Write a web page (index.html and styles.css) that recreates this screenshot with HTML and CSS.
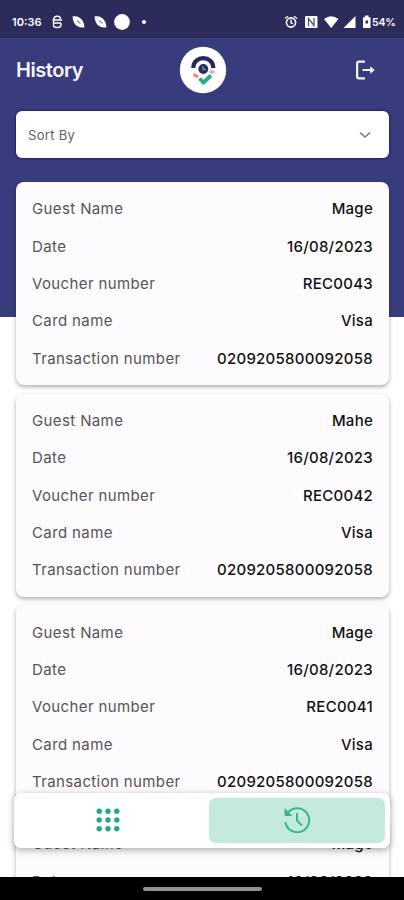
FILE: index.html
```
<!DOCTYPE html>
<html lang="en">
<head>
<meta charset="utf-8">
<title>History</title>
<link rel="stylesheet" href="styles.css">
</head>
<body>
<div class="phone">
  <div class="status">
    <span class="clock">10:36</span>
    <svg class="notifications" width="96" height="20" viewBox="0 0 96 20" fill="#fff">
      <path d="M2.800 7.500q0-3.300 3.400-3.300t3.400 3.300M1.500 8h9.500M2.500 11h7.500M2.500 8v5q0 2.500 3.700 2.500t3.700-2.500V11" fill="none" stroke="#fff" stroke-width="1.400"/>
      <path d="M21.500 4.500C26 3.500 30 5.500 32 9.500q1.300 2.500 1.500 5.800C29 16 25 14.500 23 10.500q-1.200-2.500-1.500-6z"/>
      <path d="M26 8.500l3.500 3" stroke="#8888a8" stroke-width="1.200"/>
      <path d="M43.500 4.500C48 3.500 52 5.500 54 9.500q1.300 2.500 1.500 5.800C51 16 47 14.500 45 10.500q-1.200-2.500-1.500-6z"/>
      <path d="M48 8.500l3.500 3" stroke="#8888a8" stroke-width="1.200"/>
      <circle cx="71" cy="10" r="7.900"/>
      <circle cx="93" cy="10" r="2.100"/>
    </svg>
    <svg class="system" width="88" height="20" viewBox="0 0 88 20" fill="#fff">
      <circle cx="7" cy="10.500" r="4.600" fill="none" stroke="#fff" stroke-width="1.600"/>
      <path d="M1 6.500l3-2.300M13 6.500l-3-2.300M7 7.500v3.300l2 1.200" fill="none" stroke="#fff" stroke-width="1.400"/>
      <rect x="21" y="4" width="12.500" height="12" rx="1"/>
      <path d="M24.500 14V6.500l5.500 7V6" fill="none" stroke="#56567c" stroke-width="1.300"/>
      <path d="M40 7q7.200-5.500 14.400 0L47.200 16z"/>
      <path d="M59.500 16L71.500 4v12z"/>
      <path d="M79 5.200h2V3.500h3.500v1.700h2V16H79z"/>
      <path d="M81.500 8.500h2.600v3h-2.600z" fill="#2c2c5c"/>
    </svg>
    <span class="battery">54%</span>
  </div>

  <header class="header">
    <h1>History</h1>
    <svg class="logo" width="48" height="48" viewBox="0 0 48 48">
      <circle cx="24" cy="24" r="23.200" fill="#fff"/>
      <path d="M14.300 22C14.300 8.800 34.300 8.800 34.300 22" fill="none" stroke="#25285f" stroke-width="4.200"/>
      <circle cx="24.300" cy="23" r="4.900" fill="#282960"/>
      <path d="M24 20v3.500h3" fill="none" stroke="#49a9a8" stroke-width="1.300"/>
      <path d="M14.500 28.300l4.500 2.800" stroke="#f08a98" stroke-width="3.400"/>
      <path d="M30.500 26h5M33 23.800v4.400" stroke="#f2919b" stroke-width="1.400"/>
      <path d="M20.500 32.500l4 4L32 29.500" fill="none" stroke="#2bac80" stroke-width="3.800"/>
    </svg>
    <svg class="logout" width="22" height="22" viewBox="0 0 22 22" fill="none" stroke="#f4f4fc" stroke-width="2.200">
      <path d="M11 2.700H5.100Q3.100 2.700 3.100 4.500v13q0 1.800 2 1.800H11"/>
      <path d="M8.500 11H17" stroke-width="2"/>
      <path d="M16.200 7.200l4.500 3.800-4.500 3.800z" fill="#f4f4fc" stroke="none"/>
    </svg>
  </header>

  <div class="sort">
    <span>Sort By</span>
    <svg width="12" height="8" viewBox="0 0 12 8" fill="none" stroke="#777" stroke-width="1.500"><path d="M1 1.500l5 4.500 5-4.500"/></svg>
  </div>

  <main class="list">
    <section class="card">
      <div class="row"><span>Guest Name</span><b>Mage</b></div>
      <div class="row"><span>Date</span><b>16/08/2023</b></div>
      <div class="row"><span>Voucher number</span><b>REC0043</b></div>
      <div class="row"><span>Card name</span><b>Visa</b></div>
      <div class="row"><span>Transaction number</span><b>0209205800092058</b></div>
    </section>
    <section class="card">
      <div class="row"><span>Guest Name</span><b>Mahe</b></div>
      <div class="row"><span>Date</span><b>16/08/2023</b></div>
      <div class="row"><span>Voucher number</span><b>REC0042</b></div>
      <div class="row"><span>Card name</span><b>Visa</b></div>
      <div class="row"><span>Transaction number</span><b>0209205800092058</b></div>
    </section>
    <section class="card">
      <div class="row"><span>Guest Name</span><b>Mage</b></div>
      <div class="row"><span>Date</span><b>16/08/2023</b></div>
      <div class="row"><span>Voucher number</span><b>REC0041</b></div>
      <div class="row"><span>Card name</span><b>Visa</b></div>
      <div class="row"><span>Transaction number</span><b>0209205800092058</b></div>
    </section>
    <section class="card">
      <div class="row"><span>Guest Name</span><b>Mage</b></div>
      <div class="row"><span>Date</span><b>16/08/2023</b></div>
    </section>
  </main>

  <nav class="tabs">
    <div class="tab">
      <svg width="24" height="24" viewBox="0 0 24 24" fill="#22aa7d">
        <circle cx="3.200" cy="3.200" r="2.700"/><circle cx="12" cy="3.200" r="2.700"/><circle cx="20.800" cy="3.200" r="2.700"/>
        <circle cx="3.200" cy="12" r="2.700"/><circle cx="12" cy="12" r="2.700"/><circle cx="20.800" cy="12" r="2.700"/>
        <circle cx="3.200" cy="20.800" r="2.700"/><circle cx="12" cy="20.800" r="2.700"/><circle cx="20.800" cy="20.800" r="2.700"/>
      </svg>
    </div>
    <div class="tab active">
      <svg width="28" height="28" viewBox="0 0 28 28" fill="none" stroke="#35b88c" stroke-width="2">
        <path d="M2.300 16A12 12 0 1 0 5 6.500"/>
        <path d="M2 2.800v6.700h6.700z" fill="#35b88c" stroke-width="1"/>
        <path d="M14 7v7.500l5 5"/>
      </svg>
    </div>
  </nav>
  <div class="gesture"><span class="handle"></span></div>
</div>
</body>
</html>
```
FILE: styles.css
```
* { box-sizing: border-box; }
body { margin: 0; font-family: Inter, sans-serif; }
.phone {
  position: relative;
  width: 404px;
  height: 900px;
  overflow: hidden;
  background: linear-gradient(#383c7c 317px, #fff 317px);
}
.status {
  display: flex;
  align-items: center;
  height: 38px;
  padding: 6px 10px 0 12px;
  background: #2c2c5c;
  color: #fff;
  font-size: 11px;
  font-weight: 600;
}
.clock { width: 39px; }
.system { margin-left: auto; }
.battery { width: 22px; font-size: 10.5px; letter-spacing: -.2px; }
.header {
  display: grid;
  grid-template-columns: 1fr 48px 1fr;
  align-items: center;
  height: 73px;
  padding: 0 15px 10px 16px;
  color: #f6f6fc;
}
h1 { margin: 0; font-size: 20px; font-weight: 600; line-height: 24px; letter-spacing: -.45px; }
.logout { justify-self: end; margin-right: 13px; }
.sort {
  display: flex;
  align-items: center;
  justify-content: space-between;
  height: 47px;
  margin: 0 15px 0 16px;
  padding: 0 18px 0 12px;
  border-radius: 6px;
  background: #fff;
  box-shadow: 0 0 2px 1px #20206c;
  color: #626262;
  font-size: 13px;
  letter-spacing: .3px;
}
.list {
  display: flex;
  flex-direction: column;
  gap: 8.2px;
  margin: 24px 15px 0 16px;
}
.card {
  padding: 8.300px 16px 8.500px;
  border-radius: 8px;
  background: #fdfbfe;
  box-shadow: 0 2px 4px rgba(0, 0, 0, .32);
}
.row {
  display: flex;
  align-items: center;
  justify-content: space-between;
  height: 37.340px;
  font-size: 15px;
  letter-spacing: .38px;
  color: #555;
}
.row b { color: #111; font-weight: 500; letter-spacing: .26px; }
.tabs {
  position: absolute;
  left: 14px;
  top: 793px;
  display: flex;
  justify-content: space-between;
  width: 376px;
  height: 55px;
  padding: 5px;
  border-radius: 7px;
  background: #fff;
  box-shadow: 0 2px 7px rgba(0, 0, 0, .34);
}
.tab {
  display: flex;
  flex: 0 0 178px;
  align-items: center;
  justify-content: center;
  padding-bottom: 1px;
}
.active { flex-basis: 176px; border-radius: 7px; background: #c3eadd; }
.gesture {
  position: absolute;
  left: 0;
  bottom: 0;
  display: flex;
  align-items: center;
  justify-content: center;
  width: 100%;
  height: 23px;
  background: #000;
}
.handle { width: 119px; height: 4px; border-radius: 2px; background: #929292; }
```
